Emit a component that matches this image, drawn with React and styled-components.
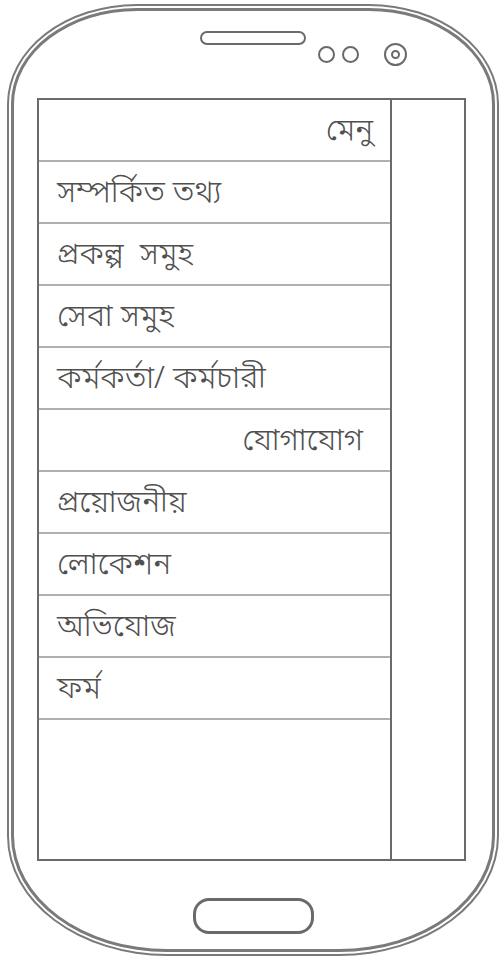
import React from "react";
import styled, { createGlobalStyle } from "styled-components";

const Global = createGlobalStyle`
  html, body { margin: 0; padding: 0; background: #fff; }
  body { width: 503px; height: 960px; overflow: hidden; }
`;

const Phone = styled.div`
  box-sizing: border-box;
  margin: 4px 0 0 7px;
  width: 492px;
  height: 952px;
  border: 2px solid #7a7a7a;
  border-radius: 130px 130px 160px 160px / 100px 100px 120px 120px;
  padding: 2px;
`;

const Body = styled.div`
  box-sizing: border-box;
  height: 100%;
  border: 3px solid #7a7a7a;
  border-radius: 126px 126px 156px 156px / 96px 96px 116px 116px;
  display: flex;
  flex-direction: column;
  align-items: center;
  padding-top: 20px;
`;

const Header = styled.div`
  width: 100%;
  display: grid;
  grid-template-columns: 1fr auto 1fr;
  align-items: start;
  height: 67px;
`;

const Speaker = styled.div`
  grid-column: 2;
  box-sizing: border-box;
  width: 106px;
  height: 14px;
  border: 2px solid #6a6a6a;
  border-radius: 7px;
`;

const Sensors = styled.div`
  grid-column: 3;
  display: flex;
  align-items: center;
  margin-top: 12px;
  padding-left: 12px;
`;

const Dot = styled.div`
  box-sizing: border-box;
  width: ${(p) => p.$size}px;
  height: ${(p) => p.$size}px;
  border: 2px solid #6a6a6a;
  border-radius: 50%;
  margin-right: ${(p) => p.$gap || 0}px;
  display: flex;
  align-items: center;
  justify-content: center;
`;

const Screen = styled.div`
  box-sizing: border-box;
  align-self: flex-start;
  margin-left: 23px;
  width: 429px;
  height: 763px;
  border: 2px solid #6a6a6a;
  display: flex;
`;

const Menu = styled.ul`
  list-style: none;
  margin: 0;
  padding: 0;
  width: 351px;
  border-right: 2px solid #6a6a6a;
`;

const Item = styled.li`
  box-sizing: border-box;
  height: 62px;
  border-bottom: 2px solid #b0b0b0;
  display: flex;
  align-items: center;
  justify-content: ${(p) => (p.$right ? "flex-end" : "flex-start")};
  padding: 5px ${(p) => p.$pr || 0}px 0 18px;
  font-family: "Noto Sans Bengali", "Noto Sans", "Lohit Bengali", sans-serif;
  font-weight: 300;
  font-size: 31px;
  color: #505050;
  white-space: pre;
`;

const Side = styled.div`
  flex: 1;
`;

const HomeButton = styled.div`
  box-sizing: border-box;
  margin-top: 37px;
  width: 121px;
  height: 36px;
  border: 3px solid #6a6a6a;
  border-radius: 16px;
`;

const items = [
  { t: "মেনু", right: true, pr: 17 },
  { t: "সম্পর্কিত তথ্য" },
  { t: "প্রকল্প  সমুহ" },
  { t: "সেবা সমুহ" },
  { t: "কর্মকর্তা/ কর্মচারী" },
  { t: "যোগাযোগ", right: true, pr: 27 },
  { t: "প্রয়োজনীয়" },
  { t: "লোকেশন" },
  { t: "অভিযোজ" },
  { t: "ফর্ম" },
];

export default function App() {
  return (
    <>
      <Global />
      <Phone>
        <Body>
          <Header>
            <Speaker />
            <Sensors>
              <Dot $size={17} $gap={7} />
              <Dot $size={17} $gap={25} />
              <Dot $size={23}>
                <Dot $size={9} />
              </Dot>
            </Sensors>
          </Header>
          <Screen>
            <Menu>
              {items.map((it, i) => (
                <Item key={i} $right={it.right} $pr={it.pr}>
                  {it.t}
                </Item>
              ))}
            </Menu>
            <Side />
          </Screen>
          <HomeButton />
        </Body>
      </Phone>
    </>
  );
}
